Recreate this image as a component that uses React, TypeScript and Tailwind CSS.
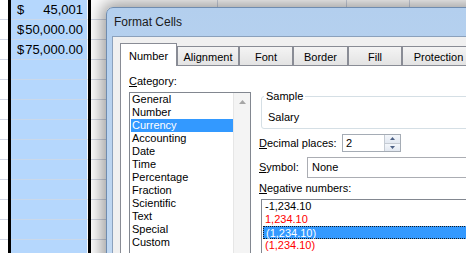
import React from "react";

const sheetRows = [
  ["$", "45,001"],
  ["$", "50,000.00"],
  ["$", "75,000.00"],
];

const categories = [
  "General",
  "Number",
  "Currency",
  "Accounting",
  "Date",
  "Time",
  "Percentage",
  "Fraction",
  "Scientific",
  "Text",
  "Special",
  "Custom",
];

function Sheet() {
  const rows = Array.from({ length: 13 }, (_, i) => i);
  return (
    <div className="flex flex-col">
      {rows.map((i) => (
        <div key={i} className="flex h-[20px] shrink-0">
          <div className="w-[8px] shrink-0 border-b border-[#d0d7e5]" />
          <div className="w-[83px] shrink-0 flex border-x-[3px] border-black">
            <div className="flex-1 flex justify-between items-center pl-[6px] pr-[4px] pt-[1px] bg-[#b5d7fd] border-b border-b-[#cad8ea] border-r border-r-white text-[13px] text-black">
              <span>{sheetRows[i]?.[0]}</span>
              <span>{sheetRows[i]?.[1]}</span>
            </div>
          </div>
          <div className="w-[127px] shrink-0 border-r border-b border-[#d0d7e5]" />
          <div className="w-[129px] shrink-0 border-r border-b border-[#d0d7e5]" />
          <div className="w-[63px] shrink-0 border-r border-b border-[#d0d7e5]" />
          <div className="w-[80px] shrink-0 border-r border-b border-[#d0d7e5]" />
        </div>
      ))}
    </div>
  );
}

function Tab({ label, w, active }: { label: string; w: string; active?: boolean }) {
  if (active) {
    return (
      <div className={`${w} shrink-0 relative z-10 h-[23px] -mb-px bg-white border border-b-0 border-[#898c95] flex justify-center pt-[6px] leading-[13px]`}>
        {label}
      </div>
    );
  }
  return (
    <div className={`${w} shrink-0 h-[19px] bg-gradient-to-b from-[#f4f4f4] to-[#e3e3e3] border border-b-0 border-[#898c95] flex justify-center pt-[4px] leading-[13px]`}>
      {label}
    </div>
  );
}

function FormatCells() {
  return (
    <div className="absolute left-[106px] top-[7px] w-[400px] h-[280px] rounded-tl-[7px] border border-[#6f8caf] bg-gradient-to-b from-[#b3cfee] to-[#c3daf3] shadow-[0_0_16px_5px_rgba(0,0,0,0.38)] flex flex-col">
      <div className="h-[28px] shrink-0 pl-[7px] flex items-center text-[12px] text-[#1a1a1a]">Format Cells</div>
      <div className="ml-[5px] flex-1 border-l border-t border-[#8ba1bc] bg-[#f0f0f0] pl-[7px] pt-[6px] text-[11px] text-black flex flex-col">
        <div className="flex items-end h-[22px] shrink-0">
          <Tab label="Number" w="w-[57px]" active />
          <Tab label="Alignment" w="w-[62px]" />
          <Tab label="Font" w="w-[54px]" />
          <Tab label="Border" w="w-[55px]" />
          <Tab label="Fill" w="w-[54px]" />
          <Tab label="Protection" w="w-[73px]" />
        </div>
        <div className="flex-1 border border-[#898c95] bg-white flex">
          <div className="pl-[8px] pt-[9px] flex flex-col shrink-0">
            <div className="leading-[13px]">
              <span className="underline">C</span>ategory:
            </div>
            <div className="mt-[4px] w-[122px] h-[170px] border border-[#828790] flex">
              <div className="flex-1 flex flex-col">
                {categories.map((c) => (
                  <div
                    key={c}
                    className={
                      c === "Currency"
                        ? "h-[13px] leading-[13px] ml-[1px] pl-[1px] bg-[#3399ff] text-white"
                        : "h-[13px] leading-[13px] pl-[2px]"
                    }
                  >
                    {c}
                  </div>
                ))}
              </div>
              <div className="w-[17px] bg-[#f4f4f4] border-l border-[#e6e6e6] flex flex-col">
                <div className="h-[17px] flex items-center justify-center">
                  <svg width="7" height="4" viewBox="0 0 7 4">
                    <path d="M0 4 L3.5 0 L7 4 Z" fill="#a6a6a6" />
                  </svg>
                </div>
              </div>
            </div>
          </div>
          <div className="ml-[8px] pt-[30px] flex-1 flex flex-col">
            <div className="ml-[2px] relative h-[33px] border border-[#d5dfe5] rounded-[3px] pl-[6px] pt-[14px] leading-[13px]">
              <span className="absolute -top-[7px] left-[2px] px-[2px] bg-white leading-[13px]">Sample</span>
              Salary
            </div>
            <div className="mt-[5px] h-[18px] flex items-center">
              <div className="w-[83px]">
                <span className="underline">D</span>ecimal places:
              </div>
              <div className="w-[59px] h-[18px] border border-[#a5acb5] flex">
                <div className="flex-1 pl-[3px] flex items-center">2</div>
                <div className="w-[16px] flex flex-col border-l border-[#c5cbd3]">
                  <div className="flex-1 bg-gradient-to-b from-[#f4f7fb] to-[#e2e8f1] border-b border-[#c5cbd3] flex items-center justify-center">
                    <svg width="5" height="3" viewBox="0 0 5 3">
                      <path d="M0 3 L2.5 0 L5 3 Z" fill="#4d6185" />
                    </svg>
                  </div>
                  <div className="flex-1 bg-gradient-to-b from-[#f4f7fb] to-[#e2e8f1] flex items-center justify-center">
                    <svg width="5" height="3" viewBox="0 0 5 3">
                      <path d="M0 0 L2.5 3 L5 0 Z" fill="#4d6185" />
                    </svg>
                  </div>
                </div>
              </div>
            </div>
            <div className="mt-[5px] h-[21px] flex items-center">
              <div className="w-[48px]">
                <span className="underline">S</span>ymbol:
              </div>
              <div className="flex-1 h-[21px] border border-[#abadb3] pl-[4px] flex items-center">None</div>
            </div>
            <div className="mt-[4px] leading-[13px]">
              <span className="underline">N</span>egative numbers:
            </div>
            <div className="mt-[4px] ml-[2px] h-[80px] border border-[#828790] flex flex-col">
              <div className="h-[13px] leading-[13px] pl-[3px]">-1,234.10</div>
              <div className="h-[13px] leading-[13px] pl-[3px] text-[#ff0000]">1,234.10</div>
              <div className="h-[13px] leading-[13px] ml-[1px] pl-[2px] bg-[#3399ff] text-white border border-dotted border-[#1b1b1b]">(1,234.10)</div>
              <div className="h-[13px] leading-[13px] pl-[3px] text-[#ff0000]">(1,234.10)</div>
            </div>
          </div>
        </div>
      </div>
    </div>
  );
}

export default function App() {
  return (
    <div className="relative w-[466px] h-[253px] overflow-hidden bg-white font-['Liberation_Sans',Arial,sans-serif]">
      <Sheet />
      <FormatCells />
    </div>
  );
}
